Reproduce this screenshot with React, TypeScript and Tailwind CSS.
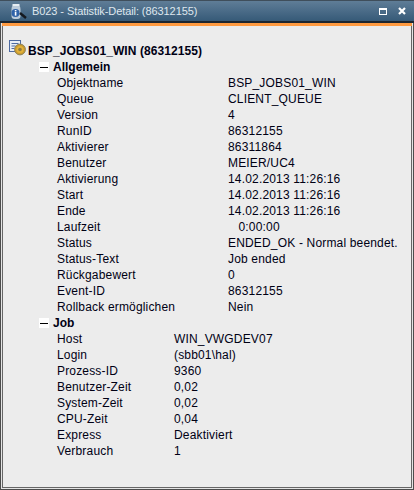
const LIGHT = { fontFamily: '"Liberation Sans", Arial, sans-serif' };

type Row = [string, string];

const allgemein: Row[] = [
  ["Objektname", "BSP_JOBS01_WIN"],
  ["Queue", "CLIENT_QUEUE"],
  ["Version", "4"],
  ["RunID", "86312155"],
  ["Aktivierer", "86311864"],
  ["Benutzer", "MEIER/UC4"],
  ["Aktivierung", "14.02.2013 11:26:16"],
  ["Start", "14.02.2013 11:26:16"],
  ["Ende", "14.02.2013 11:26:16"],
  ["Laufzeit", "\u00a0\u00a0\u00a00:00:00"],
  ["Status", "ENDED_OK - Normal beendet."],
  ["Status-Text", "Job ended"],
  ["Rückgabewert", "0"],
  ["Event-ID", "86312155"],
  ["Rollback ermöglichen", "Nein"],
];

const job: Row[] = [
  ["Host", "WIN_VWGDEV07"],
  ["Login", "(sbb01\\hal)"],
  ["Prozess-ID", "9360"],
  ["Benutzer-Zeit", "0,02"],
  ["System-Zeit", "0,02"],
  ["CPU-Zeit", "0,04"],
  ["Express", "Deaktiviert"],
  ["Verbrauch", "1"],
];

function Section({ title, rows, labelWidth }: { title: string; rows: Row[]; labelWidth: string }) {
  return (
    <div>
      <div className="flex h-4 items-center pl-[36px]">
        <div className="flex h-[10px] w-[10px] items-center justify-center bg-white">
          <div className="h-px w-[8px] bg-black" />
        </div>
        <span className="ml-[4px] text-[12px] font-bold leading-4 text-[#000014]">{title}</span>
      </div>
      {rows.map(([k, v]) => (
        <div key={k} className="flex h-4 pl-[54px] text-[12px] leading-4 tracking-[0.17px] text-[#000014]">
          <span className={labelWidth}>{k}</span>
          <span className="whitespace-pre">{v}</span>
        </div>
      ))}
    </div>
  );
}

function WindowIcon() {
  return (
    <svg width="20" height="20" viewBox="0 0 20 20" className="shrink-0">
      <path d="M1.5 8a4.5 5 0 0 1 9 0v7a3 3 0 0 1-3 3h-3a3 3 0 0 1-3-3z" fill="#bccbda" />
      <rect x="2.5" y="3" width="7" height="2" fill="#e6edf3" />
      <circle cx="5.5" cy="12" r="4" fill="#2f62a8" />
      <rect x="4.8" y="11" width="1.6" height="3.6" fill="#fff" />
      <rect x="4.8" y="9" width="1.6" height="1.4" fill="#fff" />
      <path d="M10 12l6 5" stroke="#14181e" strokeWidth="2.4" />
    </svg>
  );
}

function TreeIcon() {
  return (
    <svg width="18" height="18" viewBox="0 0 18 18" className="shrink-0 self-start">
      <rect x="0.5" y="0.5" width="11" height="11" fill="#e8eef6" stroke="#4d6aa0" />
      <path d="M2.5 3.5h7M2.5 6h4M2.5 8.5h3" stroke="#4d6aa0" />
      <circle cx="11" cy="9.5" r="5.4" fill="#c99b2e" stroke="#8d8159" strokeWidth="1" />
      <circle cx="11" cy="9.5" r="3.6" fill="#e3b23a" />
      <circle cx="11" cy="9.5" r="1.8" fill="#8f7a42" />
    </svg>
  );
}

export default function App() {
  return (
    <div className="flex h-[490px] w-[414px] flex-col overflow-hidden bg-[#4c4c4c]" style={LIGHT}>
      <div className="flex h-[21px] shrink-0 items-center border-t border-[#3f4e5b] bg-gradient-to-b from-[#5f7d97] to-[#365a78] pl-[10px] pr-[8px]">
        <WindowIcon />
        <span className="ml-[2px] text-[11px] leading-4 tracking-[-0.08px] text-[#dfe7ee]">B023 - Statistik-Detail: (86312155)</span>
        <div className="ml-auto flex items-center gap-[11px]">
          <div className="h-[7px] w-[8px] border border-t-2 border-white" />
          <svg width="8" height="8" viewBox="0 0 8 8">
            <path d="M1 1l6 6M7 1l-6 6" stroke="#fff" strokeWidth="2.2" />
          </svg>
        </div>
      </div>
      <div className="h-[2px] shrink-0 bg-[#1d2630]" />
      <div className="flex flex-1 flex-col border-x border-b border-[#4c4c4c]">
        <div className="flex flex-1 flex-col border-x border-b border-[#e4e4e4]">
          <div className="h-[3px] shrink-0 bg-[#ff9a40]" />
          <div className="flex-1 border-x border-b border-[#666666] bg-[#ececec] pt-[14px]">
            <div className="flex h-[19px] items-end pl-[6px]">
              <TreeIcon />
              <span className="ml-[1px] text-[12px] font-bold leading-4 tracking-[0.08px] text-[#000014]">BSP_JOBS01_WIN (86312155)</span>
            </div>
            <Section title="Allgemein" rows={allgemein} labelWidth="w-[171px]" />
            <Section title="Job" rows={job} labelWidth="w-[117px]" />
          </div>
        </div>
      </div>
    </div>
  );
}
